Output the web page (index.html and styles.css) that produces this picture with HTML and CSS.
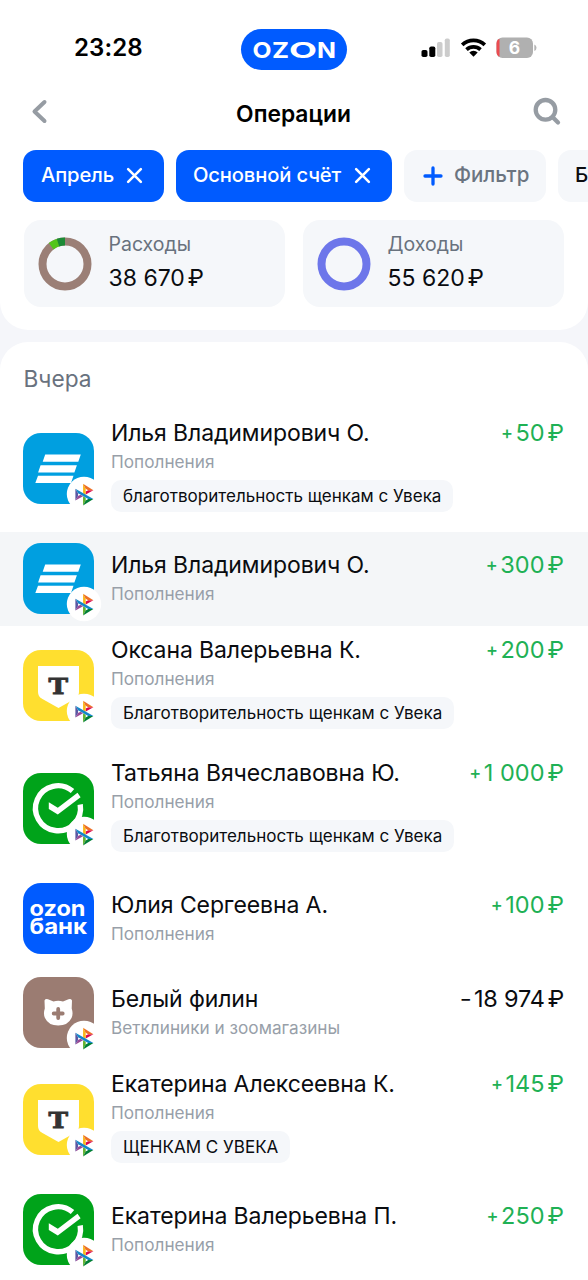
FILE: index.html
```html
<!DOCTYPE html>
<html lang="ru">
<head>
<meta charset="utf-8">
<title>Операции</title>
<link rel="stylesheet" href="styles.css">
</head>
<body>
<svg class="defs" width="0" height="0" aria-hidden="true">
  <symbol id="badge" viewBox="0 0 36 36">
    <circle cx="18" cy="18" r="17.2" fill="#fff"/>
    <g transform="translate(9.400 7.800) scale(.46 .425)">
      <path fill="#5b57a2" d="M0 11.9l5.8 10.5v6.3L0 39.1z"/>
      <path fill="#d90751" d="M22.4 18.4l5.5-3.3h11.2L22.4 25.3z"/>
      <path fill="#fab718" d="M22.3 11.8l.1 13.8-5.8-3.6V0z"/>
      <path fill="#ed6f26" d="M39.1 15.1H27.9l-5.6-3.3L16.6 0z"/>
      <path fill="#63b22f" d="M22.4 39.1v-6.5l-5.8-3.5V51z"/>
      <path fill="#1487c9" d="M27.9 35.9L5.8 22.4 0 11.9l39.1 24z"/>
      <path fill="#017f36" d="M16.6 51l5.8-11.9 5.5-3.3h11.2z"/>
      <path fill="#984995" d="M0 39.1L16.6 29 11 25.6l-5.3 3.2z"/>
    </g>
  </symbol>
  <symbol id="veb" viewBox="0 0 71 71">
    <path fill="#fff" d="M22.200 21.500H57.800l-2.500 7.300H19.700zM17.600 32.200H53.900l-2.500 7.300H15.100zM15 42.800H50.500l-2.500 7.300H12.300z"/>
  </symbol>
  <symbol id="sber" viewBox="0 0 71 71">
    <path fill="none" stroke="#fff" stroke-width="5.400" d="M49.500 18A22.500 22.500 0 1 0 57.200 31.500"/>
    <path fill="#fff" d="M25.800 29.300L34.800 34.800 54.500 19.800 57.600 24.300 34.800 41.500 25.800 36z"/>
  </symbol>
  <symbol id="vet" viewBox="0 0 71 71">
    <path fill="#fff" d="M21.500 23.500Q22.500 21.500 25 22.300L30.500 24.500Q35.200 23 40 24.500L45.500 22.300Q48 21.500 49 23.500L48.700 31.500Q50.500 37 48.500 41Q45 48.500 35.200 48.500T22 41Q20 37 21.800 31.500z"/>
    <path stroke="#9b7c72" stroke-width="3.800" stroke-linecap="round" d="M35.200 32v9M30.700 36.500h9"/>
  </symbol>
  <symbol id="cross" viewBox="0 0 16 16">
    <path stroke="#fff" stroke-width="2.400" stroke-linecap="round" d="M2 2l12 12M14 2L2 14"/>
  </symbol>
</svg>

<section class="top">
  <div class="status">
    <div class="clock">23:28</div>
    <div class="pill">
      <svg width="106" height="41" viewBox="0 0 106 41">
        <g class="wordmark">
          <text x="11.500" y="28.800" textLength="19" lengthAdjust="spacingAndGlyphs">O</text>
          <text x="31" y="28.800" textLength="17" lengthAdjust="spacingAndGlyphs">Z</text>
          <text x="48" y="28.800" textLength="28" lengthAdjust="spacingAndGlyphs">O</text>
          <text x="76" y="28.800" textLength="19" lengthAdjust="spacingAndGlyphs">N</text>
        </g>
      </svg>
    </div>
    <svg class="indicators" width="116" height="24" viewBox="0 0 116 24">
      <rect x=".5" y="14" width="6" height="7" rx="1.800" fill="#000"/>
      <rect x="8.300" y="10.500" width="6" height="10.500" rx="1.800" fill="#000"/>
      <rect x="16" y="6" width="5.500" height="15" rx="1.800" fill="#ccc"/>
      <rect x="23.800" y="2.500" width="5" height="18.500" rx="1.800" fill="#ccc"/>
      <g fill="none" stroke="#000" stroke-width="3.700">
        <path d="M41.200 8.800a16.500 16.500 0 0 1 22.600 0"/>
        <path d="M45.500 13.700a10.300 10.300 0 0 1 14 0"/>
      </g>
      <path d="M52.500 20.700l-4.200-4.300a6.200 6.200 0 0 1 8.400 0z"/>
      <rect x="75.500" y="1.500" width="36.500" height="20.500" rx="6" fill="#b0b0b0"/>
      <path fill="#ec4b50" d="M78.500 2.700v18q-3-1.200-3-4.700V7.400q0-3.500 3-4.700z"/>
      <path fill="#b5b5b5" d="M113.300 8.500q2.200.7 2.200 3.300t-2.200 3.300z"/>
      <text class="batt" x="93.500" y="18.200" text-anchor="middle">6</text>
    </svg>
  </div>
  <header class="nav">
    <svg width="20" height="28" viewBox="0 0 20 28"><path fill="none" stroke="#969ca3" stroke-width="4" stroke-linecap="round" stroke-linejoin="round" d="M15.500 4L5.500 13.500l10 9.500"/></svg>
    <h1>Операции</h1>
    <svg width="30" height="30" viewBox="0 0 30 30"><g fill="none" stroke="#969ca3" stroke-width="4.300" stroke-linecap="round"><circle cx="13.500" cy="12.800" r="9.800"/><path d="M21 20.500l5 5"/></g></svg>
  </header>
  <div class="chips">
    <div class="chip on c1"><span>Апрель</span><svg width="17" height="17"><use href="#cross"/></svg></div>
    <div class="chip on c2"><span>Основной счёт</span><svg width="17" height="17"><use href="#cross"/></svg></div>
    <div class="chip c3"><svg width="20" height="20" viewBox="0 0 20 20"><path stroke="#005bff" stroke-width="3.300" stroke-linecap="round" d="M10 2v16M2 10h16"/></svg><span>Фильтр</span></div>
    <div class="chip c4"><span>Б</span></div>
  </div>
  <div class="cards">
    <div class="card">
      <svg width="54" height="54" viewBox="0 0 54 54"><g fill="none" stroke-width="8"><circle cx="27" cy="27" r="22.500" stroke="#9b7f76"/><path stroke="#53c51a" d="M13.200 9.200A22.500 22.500 0 0 1 20.500 5.500"/><path stroke="#1c8a36" d="M20 5.600A22.500 22.500 0 0 1 27 4.500"/></g></svg>
      <div class="figures"><p class="label">Расходы</p><p class="sum">38 670<i>₽</i></p></div>
    </div>
    <div class="card">
      <svg width="54" height="54" viewBox="0 0 54 54"><circle cx="27" cy="27" r="22.500" fill="none" stroke="#6d76ea" stroke-width="8"/></svg>
      <div class="figures"><p class="label">Доходы</p><p class="sum">55 620<i>₽</i></p></div>
    </div>
  </div>
</section>

<section class="list">
  <h2>Вчера</h2>
  <div class="row tall">
    <div class="icon veb"><svg><use href="#veb"/></svg><svg class="sbp"><use href="#badge"/></svg></div>
    <div class="body"><p class="name">Илья Владимирович О.</p><p class="sub">Пополнения</p><p class="tag">благотворительность щенкам с Увека</p></div>
    <div class="amount in"><b>+</b>50<i>₽</i></div>
  </div>
  <div class="row active">
    <div class="icon veb"><svg><use href="#veb"/></svg><svg class="sbp"><use href="#badge"/></svg></div>
    <div class="body"><p class="name">Илья Владимирович О.</p><p class="sub">Пополнения</p></div>
    <div class="amount in"><b>+</b>300<i>₽</i></div>
  </div>
  <div class="row tall">
    <div class="icon tbank">
      <svg viewBox="0 0 71 71"><path fill="#fff" d="M15 16H56V42q0 4.500-4 6.800L35.500 58 19 48.800q-4-2.300-4-6.800z"/><text class="t-letter" x="25.500" y="44.300" textLength="19.500" lengthAdjust="spacingAndGlyphs">T</text></svg>
      <svg class="sbp"><use href="#badge"/></svg>
    </div>
    <div class="body"><p class="name">Оксана Валерьевна К.</p><p class="sub">Пополнения</p><p class="tag">Благотворительность щенкам с Увека</p></div>
    <div class="amount in"><b>+</b>200<i>₽</i></div>
  </div>
  <div class="row tall">
    <div class="icon sber"><svg><use href="#sber"/></svg><svg class="sbp"><use href="#badge"/></svg></div>
    <div class="body"><p class="name">Татьяна Вячеславовна Ю.</p><p class="sub">Пополнения</p><p class="tag">Благотворительность щенкам с Увека</p></div>
    <div class="amount in"><b>+</b>1 000<i>₽</i></div>
  </div>
  <div class="row">
    <div class="icon obank">
      <svg viewBox="0 0 71 71"><text class="ob" x="6.500" y="32.500" textLength="56" lengthAdjust="spacingAndGlyphs">ozon</text><text class="ob" x="6.500" y="51" textLength="57.500" lengthAdjust="spacingAndGlyphs">банк</text></svg>
    </div>
    <div class="body"><p class="name">Юлия Сергеевна А.</p><p class="sub">Пополнения</p></div>
    <div class="amount in"><b>+</b>100<i>₽</i></div>
  </div>
  <div class="row">
    <div class="icon vet"><svg><use href="#vet"/></svg><svg class="sbp"><use href="#badge"/></svg></div>
    <div class="body"><p class="name">Белый филин</p><p class="sub">Ветклиники и зоомагазины</p></div>
    <div class="amount out"><b>−</b>18 974<i>₽</i></div>
  </div>
  <div class="row tall">
    <div class="icon tbank">
      <svg viewBox="0 0 71 71"><path fill="#fff" d="M15 16H56V42q0 4.500-4 6.800L35.500 58 19 48.800q-4-2.300-4-6.800z"/><text class="t-letter" x="25.500" y="44.300" textLength="19.500" lengthAdjust="spacingAndGlyphs">T</text></svg>
      <svg class="sbp"><use href="#badge"/></svg>
    </div>
    <div class="body"><p class="name">Екатерина Алексеевна К.</p><p class="sub">Пополнения</p><p class="tag">ЩЕНКАМ С УВЕКА</p></div>
    <div class="amount in"><b>+</b>145<i>₽</i></div>
  </div>
  <div class="row">
    <div class="icon sber"><svg><use href="#sber"/></svg><svg class="sbp"><use href="#badge"/></svg></div>
    <div class="body"><p class="name">Екатерина Валерьевна П.</p><p class="sub">Пополнения</p></div>
    <div class="amount in"><b>+</b>250<i>₽</i></div>
  </div>
</section>
</body>
</html>
```
FILE: styles.css
```css
* { box-sizing: border-box; }
body {
  margin: 0;
  height: 1280px;
  overflow: hidden;
  background: #f5f6fa;
  color: #0a0c10;
  font-family: Inter, "Noto Sans", sans-serif;
}
p, h1, h2 { margin: 0; font-weight: 400; }
i, b { font-style: normal; font-weight: 400; }
svg { display: block; flex: none; }
.defs { position: absolute; }

.top { height: 330px; background: #fff; border-radius: 0 0 28px 28px; overflow: hidden; }
.status { display: grid; grid-template-columns: 241px 106px 1fr; height: 82px; padding-top: 29px; }
.clock { padding-left: 74px; font-size: 24px; font-weight: 600; line-height: 38px; letter-spacing: .1px; color: #000; }
.pill { height: 41px; border-radius: 21px; background: #005bff; }
.wordmark { font-size: 22px; font-weight: 700; fill: #fff; }
.indicators { margin: 7px 0 0 74px; }
.batt { font-size: 17.500px; font-weight: 700; fill: #fff; }
.nav { display: flex; justify-content: space-between; align-items: center; height: 60px; padding: 0 26px 0 29px; }
.nav h1 { padding: 3px 0 0 6px; font-size: 22.800px; font-weight: 600; line-height: 30px; color: #000; }

.chips { display: flex; gap: 12px; padding: 7.500px 0 0 23px; }
.chip { display: flex; flex: none; align-items: center; height: 52.500px; border-radius: 13px; background: #f5f7fa; color: #6b7480; font-size: 20.500px; font-weight: 500; line-height: 50px; white-space: nowrap; }
.chip.on { background: #005bff; color: #fff; font-size: 20.200px; letter-spacing: -.15px; }
.chip span { margin-top: -2px; }
.c1 { width: 141px; padding-left: 18px; gap: 12px; }
.c2 { width: 216px; padding-left: 17px; gap: 13px; }
.c3 { width: 142px; padding-left: 19px; gap: 11px; }
.c4 { width: 180px; padding-left: 17px; color: #0a0c10; }

.cards { display: flex; gap: 18px; padding: 18px 24px 0; }
.card { display: flex; flex: 1; align-items: center; gap: 17px; height: 87px; padding-left: 13.500px; border-radius: 17px; background: #f5f7fa; }
.figures { padding-bottom: 3px; }
.label { font-size: 19.500px; line-height: 31px; color: #69727e; }
.sum { font-size: 23px; line-height: 36px; color: #0a0c10; }
.sum i, .amount i { margin-left: 3px; }

.list { height: 938px; margin-top: 12px; border-radius: 28px 28px 0 0; background: #fff; overflow: hidden; }
.list h2 { height: 67px; padding: 21px 0 0 23.500px; font-size: 22.700px; line-height: 32px; color: #69727e; }
.row { display: grid; grid-template-columns: 71px 1fr auto; column-gap: 17px; height: 94px; padding: 11px 24px 0 23px; }
.row.tall { height: 123px; padding-top: 24px; }
.row.active { background: #f4f6f8; }
.body { padding-top: 6px; min-width: 0; }
.tall .body { margin-top: -22px; }
.name { font-size: 23px; line-height: 32px; letter-spacing: -.1px; white-space: nowrap; }
.sub { font-size: 17.200px; line-height: 26px; color: #989fa9; white-space: nowrap; }
.tag { width: fit-content; margin-top: 5px; padding: 0 12px; border-radius: 10px; background: #f5f7fa; font-size: 17.050px; line-height: 32px; white-space: nowrap; }
.amount { padding-top: 6px; font-size: 23.500px; line-height: 32px; white-space: nowrap; }
.tall .amount { margin-top: -22px; }
.amount b { position: relative; top: -2px; margin-right: 2.500px; font-size: 18px; font-weight: 500; line-height: 1; }
.amount.out { letter-spacing: -.2px; }
.in { color: #1fb155; }

.icon { position: relative; width: 71px; height: 71px; border-radius: 18px; }
.icon svg { width: 71px; height: 71px; }
.icon .sbp { position: absolute; left: 43px; top: 43px; width: 36px; height: 36px; }
.veb { background: #009fe0; }
.tbank { background: #ffdf2f; }
.sber { background: #00a31a; }
.obank { background: #005bff; }
.vet { background: #9b7c72; }
.t-letter { font-family: "DejaVu Serif", serif; font-size: 23px; font-weight: 700; fill: #333; stroke: #333; stroke-width: .9px; }
.ob { font-size: 21.500px; font-weight: 700; fill: #fff; }
```
